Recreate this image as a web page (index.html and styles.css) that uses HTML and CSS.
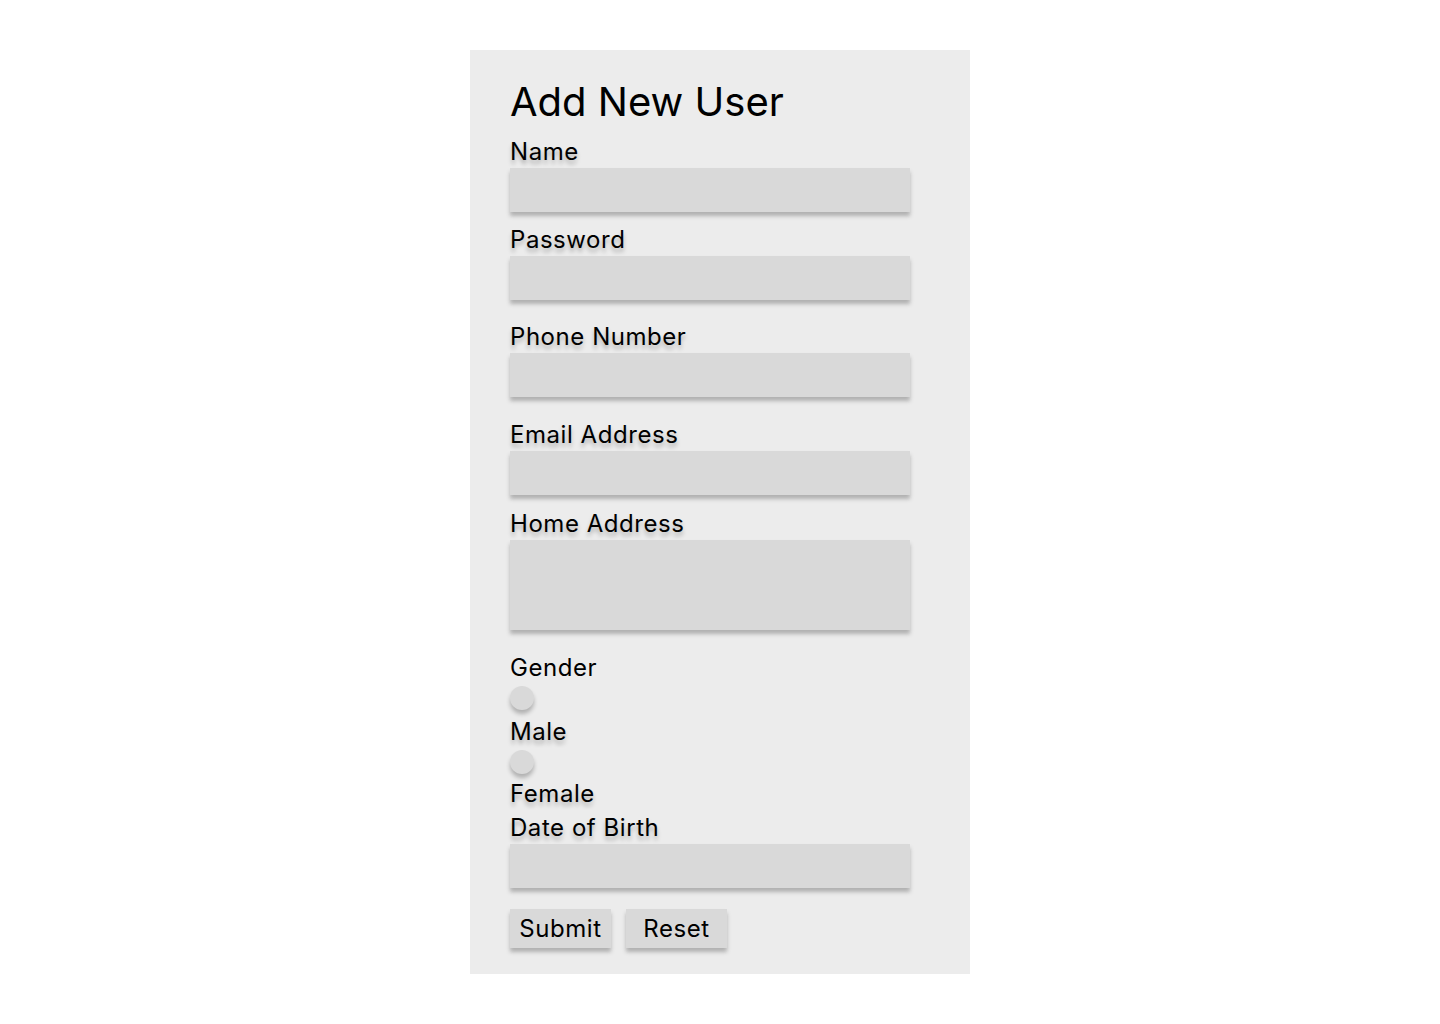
FILE: index.html
```html
<!DOCTYPE html>
<html lang="en">
<head>
<meta charset="utf-8">
<title>Add New User</title>
<link rel="stylesheet" href="styles.css">
</head>
<body>
<main class="page">
  <form class="card">
    <h1 class="title">Add New User</h1>
    <label class="label shadowed">Name</label>
    <div class="field"></div>
    <label class="label shadowed gap-s">Password</label>
    <div class="field"></div>
    <label class="label shadowed gap-p">Phone Number</label>
    <div class="field"></div>
    <label class="label shadowed gap-l">Email Address</label>
    <div class="field"></div>
    <label class="label shadowed gap-m">Home Address</label>
    <div class="field area"></div>
    <label class="label gap-l">Gender</label>
    <span class="radio"></span>
    <label class="label shadowed after-radio">Male</label>
    <span class="radio"></span>
    <label class="label shadowed after-radio2">Female</label>
    <label class="label shadowed tight">Date of Birth</label>
    <div class="field"></div>
    <div class="actions">
      <span class="btn">Submit</span>
      <span class="btn">Reset</span>
    </div>
  </form>
</main>
</body>
</html>
```

FILE: styles.css
```css
html, body {
  margin: 0;
  padding: 0;
  background: #ffffff;
}
body {
  font-family: Inter, "Noto Sans", sans-serif;
  color: #000;
}
.page {
  display: flex;
  justify-content: center;
  padding-top: 50px;
}
.card {
  width: 500px;
  box-sizing: border-box;
  background: #ececec;
  padding: 28px 40px 26px;
  display: flex;
  flex-direction: column;
  align-items: flex-start;
}
.title {
  margin: 0 0 11px;
  font-size: 40px;
  font-weight: 400;
  line-height: 48px;
}
.label {
  display: block;
  font-size: 24px;
  line-height: 29px;
  letter-spacing: 0.55px;
  margin-bottom: 2px;
}
.shadowed {
  text-shadow: 0 4px 4px rgba(0, 0, 0, 0.25);
}
.gap-s { margin-top: 13px; }
.gap-m { margin-top: 14px; }
.gap-p { margin-top: 22px; }
.gap-l { margin-top: 23px; }
.field {
  width: 400px;
  height: 44px;
  background: #d9d9d9;
  box-shadow: 0 4px 4px rgba(0, 0, 0, 0.25);
}
.field.area {
  height: 90px;
}
.radio {
  display: block;
  width: 24px;
  height: 24px;
  border-radius: 50%;
  background: #d9d9d9;
  box-shadow: 0 4px 4px rgba(0, 0, 0, 0.25);
  margin-top: 2px;
}
.after-radio { margin-top: 7px; margin-bottom: 2px; }
.after-radio2 { margin-top: 5px; margin-bottom: 5px; }
.tight { margin-top: 0; }
.actions {
  display: flex;
  gap: 15px;
  margin-top: 21px;
}
.btn {
  width: 101px;
  height: 39px;
  box-sizing: border-box;
  display: flex;
  align-items: center;
  justify-content: center;
  font-size: 24px;
  letter-spacing: 0.55px;
  background: #d9d9d9;
  box-shadow: 0 4px 4px rgba(0, 0, 0, 0.25);
}
```
